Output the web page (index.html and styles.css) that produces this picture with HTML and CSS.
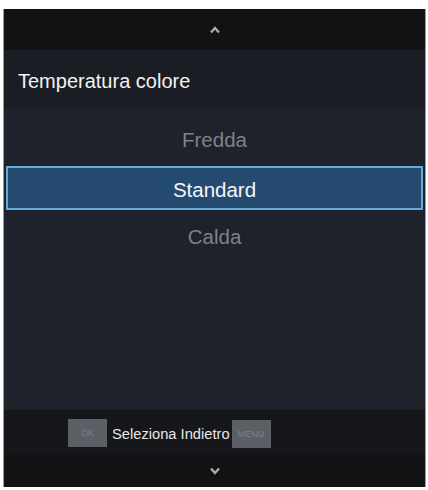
FILE: index.html
```html
<!DOCTYPE html>
<html lang="it">

<head>
  <meta charset="UTF-8" />
  <meta name="viewport" content="width=device-width, initial-scale=1.0" />
  <title>Temperatura colore</title>
  <link rel="stylesheet" href="styles.css">
</head>

<body>
  <div class="screen">
    <div class="arrow-bar">
      <svg width="12" height="8" viewBox="0 0 12 8">
        <polyline points="2,6.5 6,2 10,6.5" fill="none" stroke="#a9abae" stroke-width="2.4" />
      </svg>
    </div>

    <div class="title-bar">Temperatura colore</div>

    <div class="options">
      <div class="option">Fredda</div>
      <div class="option selected">Standard</div>
      <div class="option">Calda</div>
    </div>

    <div class="hint-bar">
      <span class="key">OK</span>
      <span class="hint-text">Seleziona Indietro</span>
      <span class="key menu">MENU</span>
    </div>

    <div class="arrow-bar bottom">
      <svg width="12" height="8" viewBox="0 0 12 8">
        <polyline points="2,1.5 6,6 10,1.5" fill="none" stroke="#a9abae" stroke-width="2.4" />
      </svg>
    </div>
  </div>
</body>

</html>
```

FILE: styles.css
```css
* {
  margin: 0;
  padding: 0;
  box-sizing: border-box;
}

body {
  background: #ffffff;
  font-family: "Liberation Sans", Arial, sans-serif;
}

.screen {
  display: flex;
  flex-direction: column;
  width: 421px;
  height: 478px;
  margin: 9px 0 0 4px;
  background: #1d2129;
  box-shadow: -1px 0 0 #9c9c9c, 1px 0 0 #9c9c9c;
}

/* Arrow bars */
.arrow-bar {
  display: flex;
  justify-content: center;
  align-items: center;
  height: 41px;
  background: #111214;
}

.arrow-bar.bottom {
  height: 32px;
}

/* Title */
.title-bar {
  display: flex;
  align-items: center;
  height: 58px;
  padding: 4px 0 0 14px;
  background: #1a1d23;
  color: #f2f2f2;
  font-size: 20px;
}

/* Options list */
.options {
  flex: 1;
  padding-top: 8px;
  background: #1e222a;
}

.option {
  display: flex;
  justify-content: center;
  align-items: center;
  height: 48px;
  color: #7e8288;
  font-size: 20.5px;
}

.option.selected {
  height: 44px;
  margin: 2px 2px;
  padding-top: 3px;
  border: 2px solid #66acd8;
  background: #254a70;
  color: #f4f6f8;
}

.option:last-child {
  padding-top: 2px;
}

/* Hint bar */
.hint-bar {
  display: flex;
  align-items: center;
  height: 45px;
  padding-left: 64px;
  background: #15171b;
}

.key {
  display: flex;
  justify-content: center;
  align-items: center;
  width: 39px;
  height: 28px;
  background: #5b6067;
  color: #7b8087;
  font-size: 9px;
}

.key.menu {
  margin-top: 3px;
}

.hint-text {
  margin: 2px 2px 0 5px;
  color: #e8e8e8;
  font-size: 14.7px;
}
```
